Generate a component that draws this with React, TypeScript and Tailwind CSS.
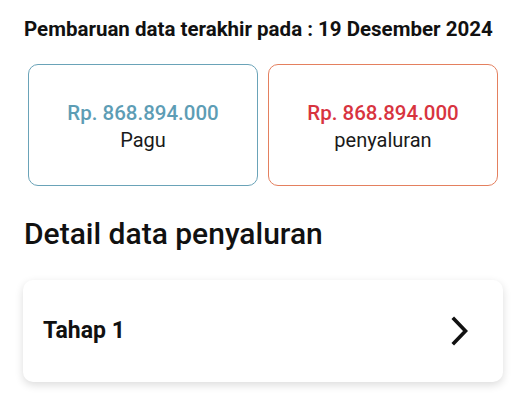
import React from "react";

export default function App() {
  return (
    <div className="w-[527px] h-[400px] bg-white overflow-hidden" style={{ fontFamily: "Roboto, 'Noto Sans', sans-serif" }}>
      <div className="pt-[16px] pl-[24px]">
        <p className="text-[20.5px] leading-[26px] font-bold text-[#111111] whitespace-nowrap">
          Pembaruan data terakhir pada : 19 Desember 2024
        </p>
      </div>
      <div className="mt-[22px] ml-[28px] w-[470px] grid grid-cols-2 gap-[10px]">
        <div className="h-[122px] rounded-[10px] border-[1.5px] border-[#6aa3b8] flex flex-col items-center justify-center pt-[4px]">
          <div className="text-[20.5px] leading-[27px] font-medium text-[#5d9db5]">Rp. 868.894.000</div>
          <div className="text-[20px] leading-[27px] text-[#1a1a1a]">Pagu</div>
        </div>
        <div className="h-[122px] rounded-[10px] border-[1.5px] border-[#e4805f] flex flex-col items-center justify-center pt-[4px]">
          <div className="text-[20.5px] leading-[27px] font-medium text-[#d8343f]">Rp. 868.894.000</div>
          <div className="text-[20px] leading-[27px] text-[#1a1a1a]">penyaluran</div>
        </div>
      </div>
      <div className="mt-[30px] pl-[24px]">
        <h2 className="text-[30px] leading-[36px] font-medium text-[#111111]">Detail data penyaluran</h2>
      </div>
      <div className="mt-[28px] ml-[23px] w-[480px] h-[102px] rounded-[10px] bg-white shadow-[0_3px_8px_rgba(0,0,0,0.14)] flex items-center justify-between pl-[20px] pr-[34px]">
        <span className="text-[23px] font-bold text-[#111111]">Tahap 1</span>
        <svg width="18" height="30" viewBox="0 0 18 30" fill="none">
          <path d="M3 3 L14.5 15 L3 27" stroke="#111111" strokeWidth="3.6" strokeLinecap="square" strokeLinejoin="miter" />
        </svg>
      </div>
    </div>
  );
}
